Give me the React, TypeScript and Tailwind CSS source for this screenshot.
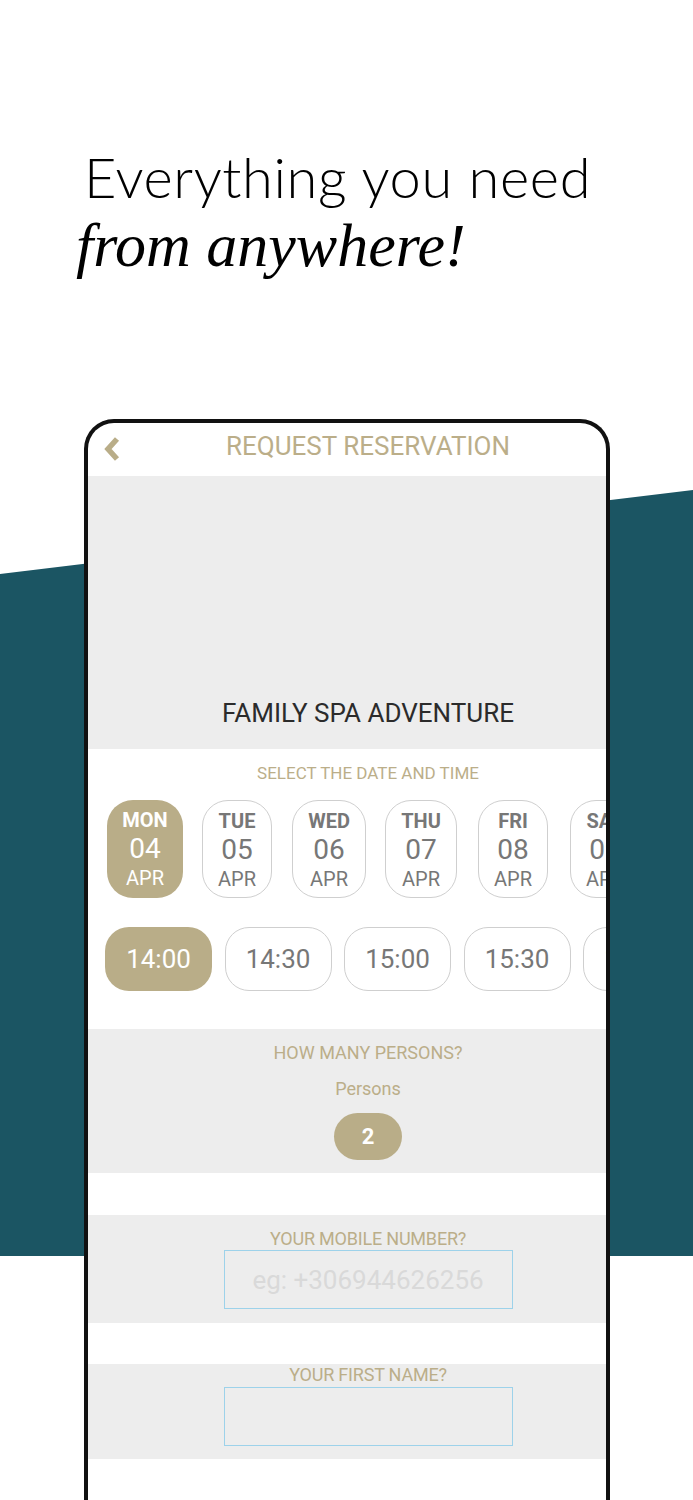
import React from 'react';

const days = [
  { day: 'MON', num: '04', mon: 'APR', active: true },
  { day: 'TUE', num: '05', mon: 'APR' },
  { day: 'WED', num: '06', mon: 'APR' },
  { day: 'THU', num: '07', mon: 'APR' },
  { day: 'FRI', num: '08', mon: 'APR' },
  { day: 'SAT', num: '09', mon: 'APR' },
];

const times = ['14:00', '14:30', '15:00', '15:30', '16:00'];

const roboto = { fontFamily: 'Roboto, "Liberation Sans", sans-serif' };

const App: React.FC = () => {
  return (
    <div className="relative h-[1500px] w-full overflow-hidden bg-white">
      {/* teal band behind the phone */}
      <div className="absolute left-0 right-0 top-[490px] h-[766px] bg-[#1b5563] [clip-path:polygon(0_84px,100%_0,100%_100%,0_100%)]" />

      <div className="relative pl-[84px] pt-[145px]">
        <h1
          className="text-[56px] leading-[64px] font-light text-black tracking-[0.6px]"
          style={{ fontFamily: 'Lato, "Noto Sans", sans-serif' }}
        >
          Everything you need
        </h1>
        <p
          className="mt-[2px] -ml-[8px] text-[62px] leading-[68px] italic text-black"
          style={{ fontFamily: '"Liberation Serif", serif' }}
        >
          from anywhere!
        </p>
      </div>

      <div className="relative mt-[140px] ml-[84px] w-[526px] h-[1200px] overflow-hidden rounded-t-[30px] border-[4px] border-b-0 border-[#111] bg-white" style={roboto}>
        <div className="w-[560px]">
          {/* header */}
          <div className="grid h-[53px] grid-cols-[1fr_auto_1fr] items-start pt-[8px]">
            <div className="pl-[15px] pt-[5px]">
              <svg width="18" height="26" viewBox="0 0 18 26" fill="none">
                <polyline points="14,3 5,13 14,23" stroke="#b9ad88" strokeWidth="5.5" strokeLinejoin="miter" />
              </svg>
            </div>
            <div className="text-[26px] leading-[30px] text-[#bbae89]">REQUEST RESERVATION</div>
            <div />
          </div>

          {/* hero */}
          <div className="flex h-[273px] flex-col items-center justify-end bg-[#ededed] pb-[21px]">
            <div className="text-[26px] leading-[30px] text-[#2b2b2b]">FAMILY SPA ADVENTURE</div>
          </div>

          {/* date & time */}
          <div className="bg-white pt-[14px] pb-[38px]">
            <div className="text-center text-[17px] leading-[20px] text-[#bbae89]">SELECT THE DATE AND TIME</div>
            <div className="mt-[17px] flex pl-[11px]">
              {days.map((d) => (
                <div key={d.day} className="flex w-[92px] shrink-0 justify-center">
                  <div
                    className={`flex h-[98px] flex-col items-center rounded-[26px] px-[15px] pt-[8px] ${
                      d.active ? 'bg-[#b9ad88] text-white' : 'border border-[#cfcfcf] text-[#777]'
                    }`}
                  >
                    <div className="text-[20px] leading-[24px] font-bold">{d.day}</div>
                    <div className="text-[28px] leading-[34px]">{d.num}</div>
                    <div className="text-[20px] leading-[24px]">{d.mon}</div>
                  </div>
                </div>
              ))}
            </div>
            <div className="mt-[29px] flex gap-[12.5px] pl-[17px]">
              {times.map((t, i) => (
                <div
                  key={t}
                  className={`flex h-[64px] w-[107px] shrink-0 items-center justify-center rounded-[24px] text-[26px] ${
                    i === 0 ? 'bg-[#b9ad88] text-white' : 'border border-[#cfcfcf] text-[#777]'
                  }`}
                >
                  {t}
                </div>
              ))}
            </div>
          </div>

          {/* persons */}
          <div className="flex flex-col items-center bg-[#ededed] pt-[13px] pb-[13px]">
            <div className="text-[18px] leading-[22px] text-[#bbae89]">HOW MANY PERSONS?</div>
            <div className="mt-[14px] text-[18px] leading-[22px] text-[#bbae89]">Persons</div>
            <div className="mt-[13px] flex h-[47px] w-[68px] items-center justify-center rounded-full bg-[#b9ad88] text-[22px] font-bold text-white">
              2
            </div>
          </div>

          <div className="h-[42px] bg-white" />

          {/* mobile */}
          <div className="flex flex-col items-center bg-[#ededed] pt-[14px] pb-[14px]">
            <div className="text-[18px] leading-[20px] tracking-[-0.2px] text-[#bbae89]">YOUR MOBILE NUMBER?</div>
            <input
              readOnly
              placeholder="eg: +306944626256"
              className="mt-[1px] h-[59px] w-[289px] border border-[#9dd2ea] bg-transparent text-center text-[26px] text-[#555] outline-none placeholder:text-[#d9d9d9]"
            />
          </div>

          <div className="h-[41px] bg-white" />

          {/* first name */}
          <div className="flex flex-col items-center bg-[#ededed] pt-[1px] pb-[13px]">
            <div className="text-[18px] leading-[20px] tracking-[-0.2px] text-[#bbae89]">YOUR FIRST NAME?</div>
            <input
              readOnly
              className="mt-[2px] h-[59px] w-[289px] border border-[#9dd2ea] bg-transparent text-center text-[26px] outline-none"
            />
          </div>

          <div className="h-[200px] bg-white" />
        </div>
      </div>
    </div>
  );
};

export default App;
